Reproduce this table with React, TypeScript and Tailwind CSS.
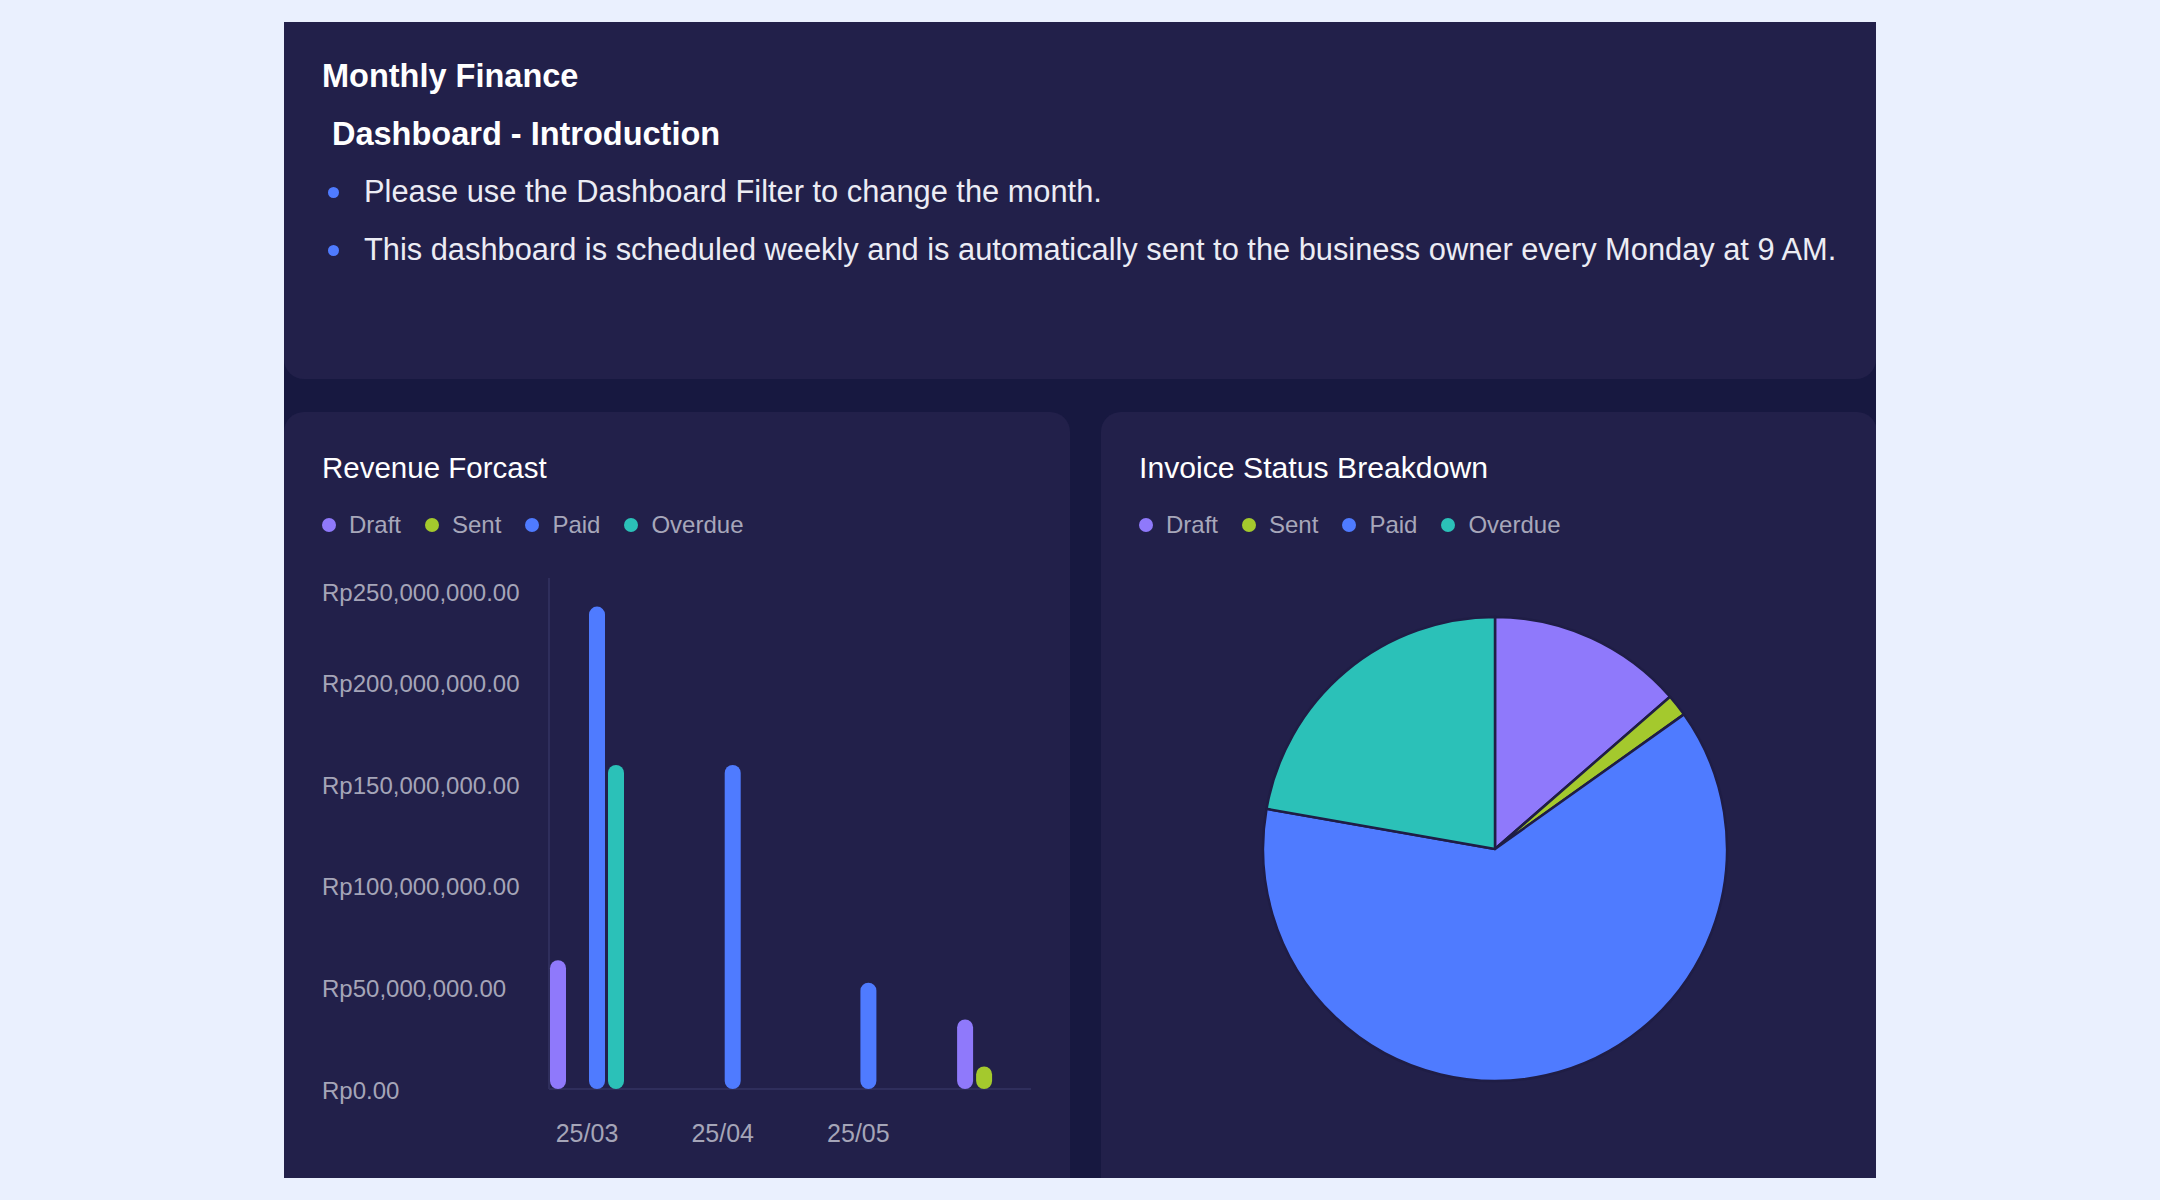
import React from 'react'

type Series = { name: string; color: string; values: number[] }

const SERIES: Series[] = [
  { name: 'Draft', color: '#8f79fb', values: [63, 0, 0, 34] },
  { name: 'Sent', color: '#a4c92d', values: [0, 0, 0, 11] },
  { name: 'Paid', color: '#4f7bff', values: [236, 158.5, 52, 0] },
  { name: 'Overdue', color: '#2bc1b8', values: [158.5, 0, 0, 0] },
]

const Y_TICKS = [
  { label: 'Rp250,000,000.00', y: 32 },
  { label: 'Rp200,000,000.00', y: 123 },
  { label: 'Rp150,000,000.00', y: 225 },
  { label: 'Rp100,000,000.00', y: 326 },
  { label: 'Rp50,000,000.00', y: 428 },
  { label: 'Rp0.00', y: 530 },
]

const MONTHS = ['25/03', '25/04', '25/05']

function Legend() {
  return (
    <div className="flex items-center gap-[24px] h-[30px] text-[24px] text-[#a7a7ba]">
      {SERIES.map((s) => (
        <div key={s.name} className="flex items-center gap-[13px]">
          <span
            className="w-[14px] h-[14px] rounded-full"
            style={{ backgroundColor: s.color }}
          />
          <span>{s.name}</span>
        </div>
      ))}
    </div>
  )
}

function BarChart() {
  const base = 529
  const perM = 2.044
  const offsets = [-29, -10, 10, 29]

  return (
    <svg width="748" height="600" className="mt-[20px] block">
      {Y_TICKS.map((t) => (
        <text
          key={t.label}
          x="0"
          y={t.y}
          dominantBaseline="central"
          fontSize="24"
          fill="#a5a5b8"
        >
          {t.label}
        </text>
      ))}
      <line x1="227" y1="18" x2="227" y2={base} stroke="#2f2e5c" strokeWidth="2" />
      <line x1="227" y1={base} x2="709" y2={base} stroke="#2f2e5c" strokeWidth="2" />
      {[0, 1, 2, 3].map((g) => {
        const gc = 265 + 135.7 * g
        return SERIES.map((s, i) => {
          const v = s.values[g]
          if (!v) return null
          const h = v * perM
          return (
            <rect
              key={s.name + g}
              x={gc + offsets[i] - 8}
              y={base - h}
              width="16"
              height={h}
              rx="8"
              fill={s.color}
            />
          )
        })
      })}
      {MONTHS.map((m, i) => (
        <text
          key={m}
          x={265 + 135.7 * i}
          y="573"
          textAnchor="middle"
          dominantBaseline="central"
          fontSize="25"
          fill="#a5a5b8"
        >
          {m}
        </text>
      ))}
    </svg>
  )
}

function PieChart() {
  const cx = 356
  const cy = 289
  const r = 232
  const totals = SERIES.map((s) => s.values.reduce((a, b) => a + b, 0))
  const sum = totals.reduce((a, b) => a + b, 0)
  let start = 0

  const point = (deg: number) => {
    const rad = (deg * Math.PI) / 180
    return [cx + r * Math.sin(rad), cy - r * Math.cos(rad)]
  }

  return (
    <svg width="700" height="600" className="mt-[20px] block">
      {SERIES.map((s, i) => {
        const sweep = (totals[i] / sum) * 360
        const [x1, y1] = point(start)
        const [x2, y2] = point(start + sweep)
        const large = sweep > 180 ? 1 : 0
        start += sweep
        return (
          <path
            key={s.name}
            d={`M ${cx} ${cy} L ${x1} ${y1} A ${r} ${r} 0 ${large} 1 ${x2} ${y2} Z`}
            fill={s.color}
            stroke="#1f1d45"
            strokeWidth="2.5"
            strokeLinejoin="round"
          />
        )
      })}
    </svg>
  )
}

export default function App() {
  return (
    <div className="w-[2160px] h-[1200px] bg-[#eaf0fe] pt-[22px] pl-[284px] font-['Liberation_Sans',Arial,sans-serif]">
      <div className="w-[1592px] h-[1156px] bg-[#171840] overflow-hidden flex flex-col">
        <div className="h-[357px] shrink-0 bg-[#22204a] rounded-b-[20px] pt-[25px] px-[38px]">
          <div className="text-[32.5px] font-bold leading-[58px] text-white">
            Monthly Finance
          </div>
          <div className="text-[32.5px] font-bold leading-[58px] text-white pl-[10px]">
            Dashboard - Introduction
          </div>
          <ul className="text-[30.8px] leading-[58px] text-[#ececf4] whitespace-nowrap">
            <li className="flex items-center gap-[25px] pl-[6px]">
              <span className="w-[11px] h-[11px] rounded-full bg-[#4f7bff]" />
              Please use the Dashboard Filter to change the month.
            </li>
            <li className="flex items-center gap-[25px] pl-[6px]">
              <span className="w-[11px] h-[11px] rounded-full bg-[#4f7bff]" />
              This dashboard is scheduled weekly and is automatically sent to
              the business owner every Monday at 9 AM.
            </li>
          </ul>
        </div>

        <div className="flex gap-[31px] mt-[33px]">
          <div className="w-[786px] h-[800px] shrink-0 bg-[#22204a] rounded-[20px] pt-[36px] px-[38px]">
            <div className="text-[29.5px] leading-[40px] text-white">
              Revenue Forcast
            </div>
            <div className="mt-[22px]">
              <Legend />
            </div>
            <BarChart />
          </div>

          <div className="flex-1 h-[800px] bg-[#22204a] rounded-[20px] pt-[36px] px-[38px]">
            <div className="text-[30.2px] leading-[40px] text-white">
              Invoice Status Breakdown
            </div>
            <div className="mt-[22px]">
              <Legend />
            </div>
            <PieChart />
          </div>
        </div>
      </div>
    </div>
  )
}
